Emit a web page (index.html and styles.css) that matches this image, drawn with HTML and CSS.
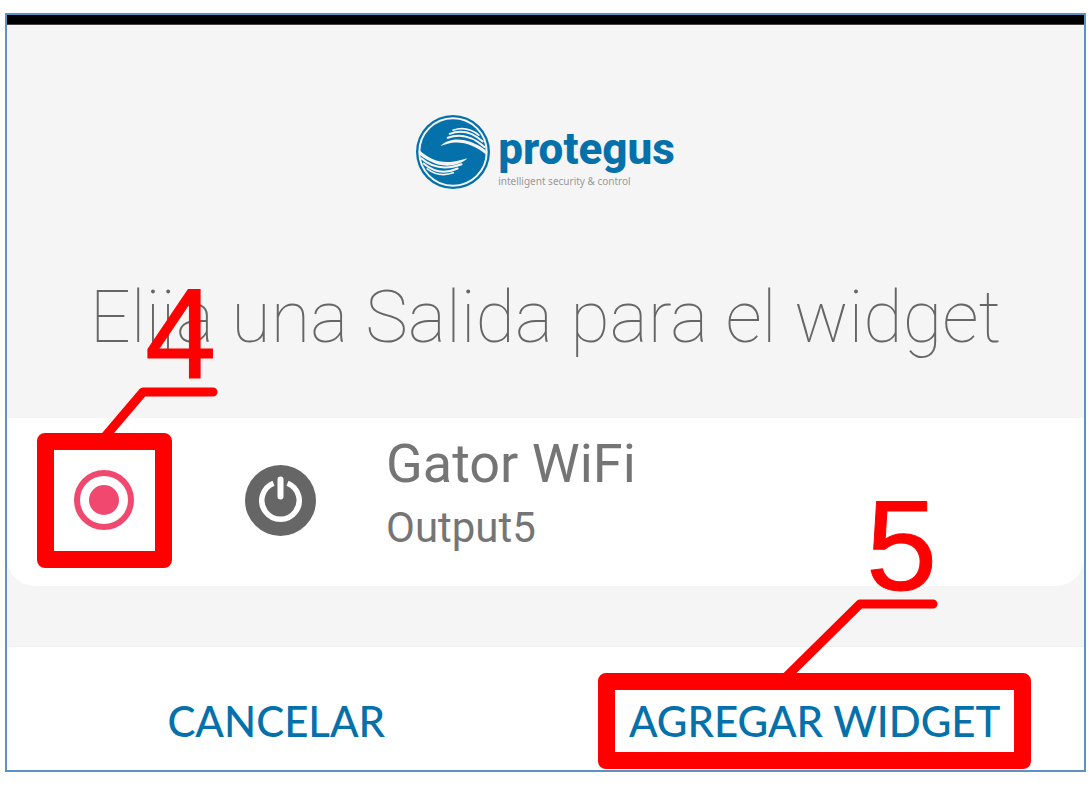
FILE: index.html
```html
<!DOCTYPE html>
<html lang="es">
<head>
<meta charset="utf-8">
<title>Protegus</title>
<link rel="stylesheet" href="styles.css">
</head>
<body>
<main class="screen">
  <div class="status-bar"></div>
  <header class="header">
    <div class="brand">
      <svg class="brand-mark" viewBox="0 0 224 224" aria-hidden="true">
        <circle cx="112" cy="112" r="112" fill="#0571aa"/>
        <circle cx="112" cy="112" r="102" fill="none" stroke="#f5f5f5" stroke-width="6"/>
        <g fill="none" stroke="#f5f5f5" stroke-linecap="round">
          <path d="M96 69C134 55 174 66 207 97" stroke-width="6"/>
          <path d="M102 57C136 44 172 53 202 80" stroke-width="6"/>
          <path d="M112 46C142 36 168 43 190 61" stroke-width="5"/>
          <path d="M16 131C48 160 88 167 138 149" stroke-width="6"/>
          <path d="M23 147C52 172 88 179 126 162" stroke-width="6"/>
          <path d="M34 163C58 181 84 185 113 175" stroke-width="5"/>
        </g>
        <path d="M213 120C184 96 152 82 118 83C100 84 86 90 74 94C94 73 128 68 164 81C186 89 204 101 213 108Z" fill="#f5f5f5"/>
        <path d="M10 106C36 131 66 145 104 142C126 140 142 135 156 131C132 153 92 160 58 147C34 137 15 125 10 118Z" fill="#f5f5f5"/>
      </svg>
      <div class="brand-text">
        <span class="brand-name">protegus</span>
        <span class="brand-tagline">intelligent security &amp; control</span>
      </div>
    </div>
    <h1 class="title">Elija una Salida para el widget</h1>
  </header>

  <section class="output">
    <div class="marker marker-radio">
      <input class="radio" type="radio" name="output" id="output5" checked>
      <svg class="callout callout-radio" viewBox="0 0 190 160">
        <path d="M66 156L106 109H176"/>
        <text x="108" y="95">4</text>
      </svg>
    </div>
    <label class="output-label" for="output5">
      <svg class="power" viewBox="0 0 71 71" aria-hidden="true">
        <circle cx="35.5" cy="35.5" r="35.5" fill="#666"/>
        <path d="M28.5 18.2A18.7 18.7 0 1 0 42.5 18.2" fill="none" stroke="#fff" stroke-width="5.5"/>
        <path d="M35.5 14.5V31.5" fill="none" stroke="#666" stroke-width="11"/>
        <path d="M35.5 14.5V31.5" fill="none" stroke="#fff" stroke-width="6" stroke-linecap="round"/>
      </svg>
      <span class="output-text">
        <span class="output-device">Gator WiFi</span>
        <span class="output-name">Output5</span>
      </span>
    </label>
  </section>

  <footer class="actions">
    <div class="action">
      <button class="button" type="button">CANCELAR</button>
    </div>
    <div class="action">
      <div class="marker marker-button">
        <button class="button" type="button">AGREGAR WIDGET</button>
        <svg class="callout callout-button" viewBox="0 0 170 190">
          <path d="M4 186L80 111H153"/>
          <text x="86" y="97">5</text>
        </svg>
      </div>
    </div>
  </footer>
</main>
</body>
</html>
```
FILE: styles.css
```css
* {
  box-sizing: border-box;
}

body {
  margin: 0;
  padding: 13px 4px 18px 5px;
  background: #fff;
  font-family: Roboto, sans-serif;
}

.screen {
  border: 2px solid #5b93c4;
  background: #f5f5f5;
}

.status-bar {
  height: 10px;
  background: #000;
  border-bottom: 1px solid #4a4040;
}

.header {
  display: flex;
  flex-direction: column;
  align-items: center;
  padding: 90px 0 57px;
}

.brand {
  display: flex;
  gap: 8px;
}

.brand-mark {
  width: 74px;
  height: 74px;
}

.brand-text {
  display: flex;
  flex-direction: column;
  padding-top: 9px;
}

.brand-name {
  font: 800 44px/50px Roboto, sans-serif;
  color: #0571aa;
}

.brand-tagline {
  font: 10px/14px "Noto Sans", sans-serif;
  color: #999;
}

.title {
  margin: 86px 0 0;
  font-size: 72px;
  line-height: 86px;
  font-weight: 100;
  color: #666;
  white-space: nowrap;
}

.output {
  display: flex;
  align-items: center;
  padding: 15px 30px 18px;
  background: #fff;
  border-radius: 0 0 28px 28px;
}

.marker {
  position: relative;
  display: flex;
  align-items: center;
  justify-content: center;
  border: 17px solid #f00;
  border-radius: 8px;
}

.marker-radio {
  width: 135px;
  height: 135px;
}

.radio {
  appearance: none;
  display: grid;
  place-items: center;
  width: 60px;
  height: 60px;
  margin: 0 2px 2px 0;
  border: 6px solid #f0486f;
  border-radius: 50%;
}

.radio:checked::before {
  content: "";
  width: 30px;
  height: 30px;
  border-radius: 50%;
  background: #f0486f;
}

.callout {
  position: absolute;
  z-index: 1;
  overflow: visible;
  pointer-events: none;
}

.callout path {
  fill: none;
  stroke: #f00;
  stroke-width: 9px;
  stroke-linecap: round;
  stroke-linejoin: round;
}

.callout text {
  fill: #f00;
  font: 128px "Liberation Sans", Arial, sans-serif;
  stroke: #f00;
  stroke-width: 1px;
}

.callout-radio {
  left: -17px;
  bottom: 108px;
  width: 190px;
  height: 160px;
}

.callout-button {
  left: 165px;
  bottom: 69px;
  width: 170px;
  height: 190px;
}

.output-label {
  display: flex;
  align-items: center;
  gap: 70px;
  margin-left: 73px;
}

.power {
  width: 71px;
  height: 71px;
}

.output-text {
  display: flex;
  flex-direction: column;
  padding-bottom: 6px;
  color: #757575;
}

.output-device {
  font-size: 54px;
  line-height: 60px;
}

.output-name {
  font-size: 42px;
  line-height: 68px;
}

.actions {
  display: grid;
  grid-template-columns: 1fr 1fr;
  margin-top: 60px;
  padding: 26px 0 1px;
  border-top: 1px solid #efefef;
  background: #fff;
}

.action {
  display: flex;
  align-items: center;
  justify-content: center;
}

.button {
  padding: 0 14px;
  border: 0;
  background: none;
  font: 500 42px/62px Lato, sans-serif;
  color: #0571aa;
  white-space: nowrap;
}
```
